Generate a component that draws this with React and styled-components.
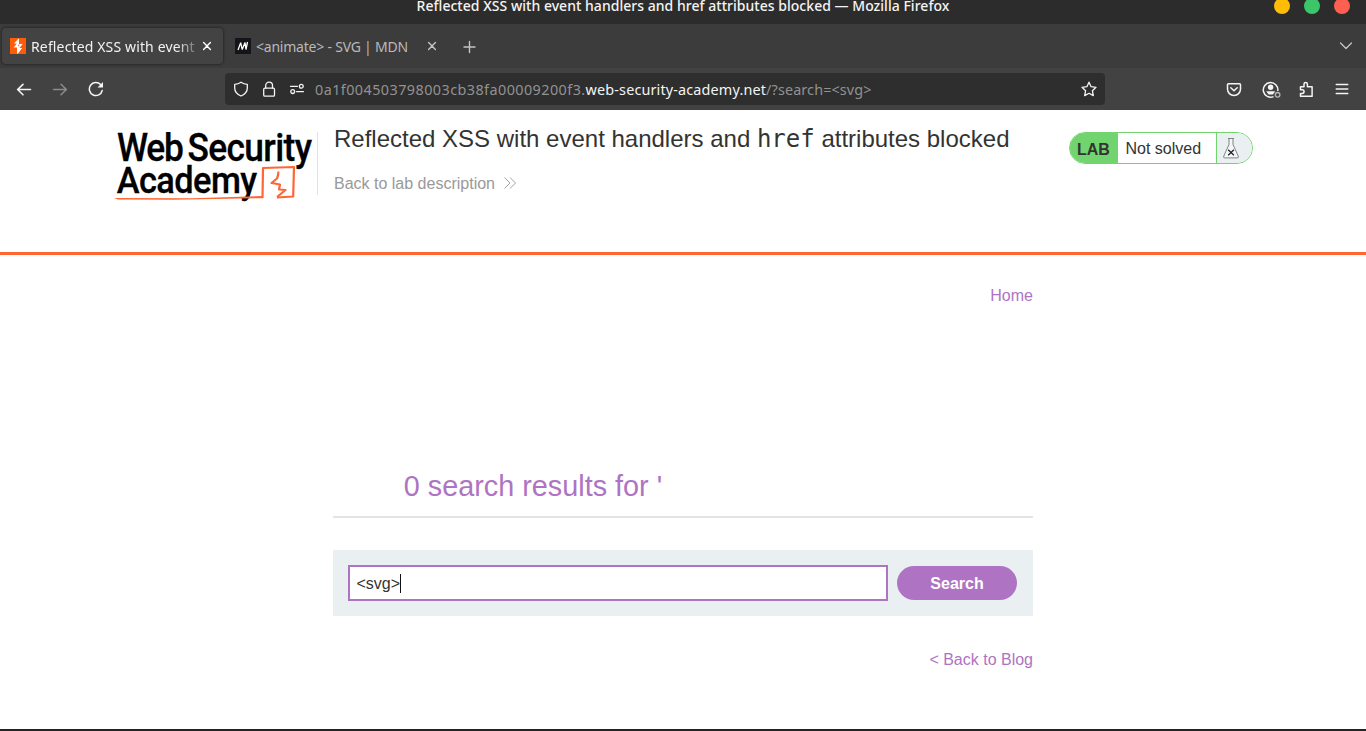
import React from "react";
import styled, { createGlobalStyle, css } from "styled-components";

const Global = createGlobalStyle`
  *, *::before, *::after { box-sizing: border-box; }
  body { margin: 0; background: #fff; overflow: hidden; }
  svg { display: block; flex: none; }
`;

const ui = css`
  font-family: "Noto Sans", "Open Sans", sans-serif;
  white-space: nowrap;
`;

const Window = styled.div`
  display: flex;
  flex-direction: column;
  height: 731px;
  width: 1366px;
  overflow: hidden;
  border-bottom: 2px solid #242424;
  font-family: "Liberation Sans", Arial, sans-serif;
  color: #333332;
`;

const TitleBar = styled.div`
  ${ui}
  display: grid;
  grid-template-columns: 1fr auto 1fr;
  height: 24px;
  flex: none;
  background: #2c2c2c;
  color: #f4f4f4;
  font-size: 14px;
  font-weight: 500;
  line-height: 20px;
`;
const WindowTitle = styled.div`
  grid-column: 2;
  margin-top: -4px;
  letter-spacing: 0.03px;
`;
const Controls = styled.div`
  display: flex;
  justify-content: flex-end;
  gap: 14px;
  margin-top: -2px;
  padding-right: 16px;
`;
const Dot = styled.span`
  width: 16px;
  height: 16px;
  border-radius: 50%;
  background: ${(p) => p.$color};
`;

const TabStrip = styled.div`
  display: flex;
  align-items: center;
  height: 44px;
  flex: none;
  padding: 0 12px 0 2px;
  background: #3c3c3c;
`;
const Tab = styled.div`
  ${ui}
  display: flex;
  align-items: center;
  width: 221px;
  height: 36px;
  padding-left: 8px;
  margin-right: 4px;
  border-radius: 4px;
  color: ${(p) => (p.$active ? "#f2f2f2" : "#b9b9b9")};
  background: ${(p) => (p.$active ? "#434343" : "transparent")};
  box-shadow: ${(p) => (p.$active ? "0 0 3px rgba(0, 0, 0, 0.65)" : "none")};
`;
const TabLabel = styled.span`
  width: 165px;
  margin: 0 3px 0 5px;
  padding-top: 1px;
  overflow: hidden;
  font-size: 14px;
  line-height: 20px;
  letter-spacing: ${(p) => p.$spacing}px;
  mask-image: ${(p) => (p.$fade ? "linear-gradient(90deg, #000 88%, transparent 104%)" : "none")};
`;
const Spacer = styled.div`
  flex: 1;
`;
const NewTab = styled.div`
  padding: 1px 0 0 4px;
`;

const Toolbar = styled.div`
  display: flex;
  align-items: center;
  height: 42px;
  flex: none;
  padding: 0 16px;
  background: #424242;
  color: #f4f4f4;
`;
const NavButtons = styled.div`
  display: flex;
  gap: 20px;
  width: 209px;
`;
const UrlBar = styled.div`
  display: flex;
  align-items: center;
  width: 880px;
  height: 32px;
  padding: 0 8px;
  border-radius: 4px;
  background: #2e2e2e;
`;
const UrlIcons = styled.div`
  display: flex;
  gap: 12px;
  margin-right: 10px;
`;
const Url = styled.div`
  ${ui}
  flex: 1;
  padding-top: 1px;
  color: #929292;
  font-size: 14.4px;
  line-height: 20px;
  letter-spacing: 0.12px;
`;
const Subdomain = styled.span`
  letter-spacing: 0.43px;
`;
const Domain = styled.span`
  color: #f4f4f4;
  letter-spacing: 0.15px;
`;
const Actions = styled.div`
  display: flex;
  flex: 1;
  justify-content: flex-end;
  gap: 20px;
`;
const AccountIcon = styled.svg`
  margin-right: -4px;
`;

const LabHeader = styled.header`
  display: flex;
  height: 145px;
  flex: none;
  padding: 22px 113px 0;
  border-bottom: 3px solid #ff6633;
`;
const LogoBox = styled.div`
  width: 205px;
  height: 63px;
  border-right: 1px solid #e2e2e2;
`;
const Heading = styled.div`
  flex: 1;
  padding-left: 16px;
  margin-top: -8px;
`;
const Title = styled.h2`
  margin: 0;
  font-size: 24px;
  font-weight: 400;
  line-height: 30px;
  white-space: nowrap;
`;
const Code = styled.code`
  font-family: "DejaVu Sans Mono", monospace;
  font-size: 24px;
`;
const DescriptionLink = styled.a`
  display: flex;
  align-items: center;
  gap: 9px;
  margin-top: 20px;
  color: #999;
  font-size: 16px;
  line-height: 19px;
`;
const Chevrons = styled.svg`
  margin-bottom: 2px;
`;
const Status = styled.div`
  display: flex;
  width: 184px;
  height: 32px;
  overflow: hidden;
  border: 1px solid #72d46e;
  border-radius: 16px;
  font-size: 16px;
  line-height: 31px;
`;
const StatusLabel = styled.span`
  width: 48px;
  padding-left: 7px;
  background: #72d46e;
  font-weight: 700;
  line-height: 33px;
`;
const StatusText = styled.span`
  width: 99px;
  padding-left: 7.5px;
  border-right: 1px solid #72d46e;
`;
const StatusIcon = styled.span`
  flex: 1;
  padding: 5px 0 0 6px;
  background: #eaeff2;
`;

const Page = styled.main`
  display: flex;
  flex-direction: column;
  width: 700px;
  margin: 0 auto;
`;
const PageLink = styled.a`
  align-self: flex-end;
  color: #ae74c3;
  font-size: 16px;
  line-height: 18px;
  margin-top: ${(p) => p.$top}px;
`;
const Results = styled.h1`
  height: 54px;
  margin: 159px 0 32px;
  padding-left: 70.8px;
  border-bottom: 2px solid #e4e4e4;
  color: #ae74c3;
  font-size: 28.8px;
  font-weight: 400;
  line-height: 44px;
`;
const SearchForm = styled.div`
  display: flex;
  align-items: center;
  gap: 9px;
  height: 66px;
  padding: 0 15px;
  background: #eaeff2;
`;
const SearchField = styled.div`
  display: flex;
  align-items: center;
  width: 540px;
  height: 36px;
  padding-left: 6.4px;
  border: 2px solid #ae74c3;
  background: #fff;
  font-size: 16px;
`;
const Query = styled.span`
  padding-top: 2px;
`;
const Caret = styled.span`
  width: 1px;
  height: 19px;
  background: #111;
`;
const SearchButton = styled.button`
  width: 120px;
  height: 34px;
  padding: 2px 0 0;
  border: 0;
  border-radius: 17px;
  background: #ae74c3;
  color: #fff;
  font: 700 16px "Liberation Sans", Arial, sans-serif;
`;

const Icon = ({ size = 16, children, color = "currentColor", width = 1.3 }) => (
  <svg width={size} height={size} viewBox={`0 0 ${size} ${size}`} fill="none" stroke={color}
    strokeWidth={width} strokeLinecap="round" strokeLinejoin="round">{children}</svg>
);

const BurpIcon = () => (
  <svg width="16" height="16" viewBox="0 0 16 16">
    <path fill="#ff5c0a" d="M0 0h16v16H0z" />
    <path fill="#fff" d="M8.300.8H9v5.200h3.600L9.500 10h2.600L8 15.400H7V9.500H3.700L6.800 5.600H4z" />
    <path fill="#ff5c0a" d="M8.200 6.800h1.700L8.200 8.800z" />
  </svg>
);
const MdnIcon = () => (
  <svg width="16" height="16" viewBox="0 0 16 16">
    <path fill="#15141a" d="M0 0h16v16H0z" />
    <path d="M3 12 5.700 4.600 7.200 11.500 10 4.600 11 11.500 12.500 4" fill="none" stroke="#fff" strokeWidth="1.300" strokeLinejoin="bevel" />
  </svg>
);
const CloseIcon = ({ color }) => (
  <Icon color={color} width={1.4}><path d="m4.600 4.600 6.800 6.800M11.400 4.600l-6.800 6.800" /></Icon>
);

const Logo = () => (
  <svg width="202" height="72" viewBox="0 0 202 72">
    <g fill="#000" stroke="#000" strokeWidth="0.300" fontFamily="Roboto, sans-serif" fontWeight="500" transform="scale(0.93 1)">
      <text x="4.300" y="28.500" fontSize="38" textLength="72" lengthAdjust="spacing">Web</text>
      <text x="80" y="28.500" fontSize="38" textLength="134" lengthAdjust="spacing">Security</text>
      <text x="4" y="61.500" fontSize="37" textLength="151" lengthAdjust="spacing">Academy</text>
    </g>
    <g fill="none" stroke="#ff6633" strokeWidth="2.200" strokeLinejoin="round">
      <path d="M149.500 66 150 36l31-1-.8 29.500L164 65.500" />
      <path d="M165.300 39.500c.5 2.500-.5 5-1.300 7l-5.500 4.500 8.500 1.500-1 5 6.500.5-8.500 7" />
    </g>
    <path fill="#ff6633" d="M1 66 80 66.200 150 64v2.200L60 67.800 5 67.600z" />
  </svg>
);

export default function App() {
  return (
    <Window>
      <Global />
      <TitleBar>
        <WindowTitle>Reflected XSS with event handlers and href attributes blocked — Mozilla Firefox</WindowTitle>
        <Controls><Dot $color="#ffbd08" /><Dot $color="#3ac669" /><Dot $color="#ff5f50" /></Controls>
      </TitleBar>
      <TabStrip>
        <Tab $active>
          <BurpIcon />
          <TabLabel $fade $spacing={0.14}>Reflected XSS with event handlers</TabLabel>
          <CloseIcon color="#fff" />
        </Tab>
        <Tab>
          <MdnIcon />
          <TabLabel $spacing={-0.22}>&lt;animate&gt; - SVG | MDN</TabLabel>
          <CloseIcon color="#c4c4c4" />
        </Tab>
        <NewTab><Icon size={28} width={1.400} color="#c4c4c4"><path d="M13.500 8.500v11M8 14h11" /></Icon></NewTab>
        <Spacer />
        <Icon size={16} color="#c4c4c4"><path d="M2.500 5 8 10.500 13.500 5" /></Icon>
      </TabStrip>
      <Toolbar>
        <NavButtons>
          <Icon width={1.600}><path d="M14.500 8.500H1.800M7 3.300 1.600 8.500 7 13.800" /></Icon>
          <Icon width={1.500} color="#8b8b8b"><path d="M1.500 8.500h12.700M9 3.300l5.400 5.200L9 13.800" /></Icon>
          <Icon width={1.500}><path d="M14.200 9.500A6.500 6.500 0 1 1 12.600 3.600" /><path fill="currentColor" stroke="none" d="M15 1v5.500H9.500z" /></Icon>
        </NavButtons>
        <UrlBar>
          <UrlIcons>
            <Icon><path d="M8 1.200c2.200 1.500 4.200 2 6.300 2.200V7c0 3.800-2.800 6.500-6.300 8-3.500-1.500-6.300-4.200-6.300-8V3.400C3.800 3.200 5.800 2.700 8 1.200z" /></Icon>
            <Icon><rect x="2.700" y="7.200" width="10.800" height="8" rx="1.200" /><path d="M4.700 7V4.500a3.400 3.400 0 0 1 6.800 0V7" /></Icon>
            <Icon><path d="M1.500 5.300h7M7.500 10.600h7" /><circle cx="12.300" cy="5.200" r="1.900" /><circle cx="3.700" cy="10.600" r="1.900" /></Icon>
          </UrlIcons>
          <Url><Subdomain>0a1f004503798003cb38fa00009200f3.</Subdomain><Domain>web-security-academy.net</Domain>/?search=&lt;svg&gt;</Url>
          <Icon><path d="m8 1.200 2.100 4.500 4.900.6-3.600 3.400.9 4.900L8 12.300l-4.300 2.300.9-4.900L1 6.300l4.900-.6z" /></Icon>
        </UrlBar>
        <Actions>
          <Icon width={1.500}><path d="M2.500 2.800h11a1 1 0 0 1 1 1V8a6.500 6.500 0 0 1-13 0V3.800a1 1 0 0 1 1-1zM4.800 6.800 8 9.800l3.200-3" /></Icon>
          <AccountIcon width="20" height="17" viewBox="0 0 20 17" fill="none" stroke="currentColor" strokeWidth="1.500">
            <path d="M11.500 15.600A7.300 7.300 0 1 1 15.800 10" /><circle cx="8.600" cy="6.300" r="2.700" fill="currentColor" stroke="none" />
            <path d="M4.200 10.200h9l-2.200 3.200H6.600z" fill="currentColor" stroke="none" />
            <circle cx="15.600" cy="13.800" r="2.300" stroke="#b5b5b5" strokeWidth="1.300" />
          </AccountIcon>
          <Icon width={1.500}><path d="M2.500 5.700h3.500V3.200a1.700 1.700 0 0 1 3.400 0v2.500h4.700v9.600H2.500v-2.900h1.700a1.800 1.800 0 0 0 0-3.700H2.500z" /></Icon>
          <Icon width={1.400}><path d="M2.200 3.500h11.600M2.200 8h11.600M2.200 12.500h11.600" /></Icon>
        </Actions>
      </Toolbar>
      <LabHeader>
        <LogoBox><Logo /></LogoBox>
        <Heading>
          <Title>Reflected XSS with event handlers and <Code>href</Code> attributes blocked</Title>
          <DescriptionLink>
            Back to lab description
            <Chevrons width="12" height="12" viewBox="0 0 12 12" fill="none" stroke="#999" strokeWidth="0.9"><path d="m.5.500 5.500 5.500-5.500 5.500M6 .500 11.500 6 6 11.500" /></Chevrons>
          </DescriptionLink>
        </Heading>
        <Status>
          <StatusLabel>LAB</StatusLabel>
          <StatusText>Not solved</StatusText>
          <StatusIcon>
            <svg width="17" height="21" viewBox="0 0 17 21" fill="none">
              <path d="M5 .5h6M6 .5v6L.8 18q-.8 1.900 1 1.900h12.400q1.800 0 1-1.900L10 6.500v-6" stroke="#777" strokeWidth="0.900" fill="#f4f7f8" />
              <path d="m5.200 11.800 5.700 5.400M10.900 11.800l-5.700 5.400" stroke="#222" strokeWidth="1.300" />
            </svg>
          </StatusIcon>
        </Status>
      </LabHeader>
      <Page>
        <PageLink $top={32}>Home</PageLink>
        <Results>0 search results for '</Results>
        <SearchForm>
          <SearchField><Query>&lt;svg&gt;</Query><Caret /></SearchField>
          <SearchButton>Search</SearchButton>
        </SearchForm>
        <PageLink $top={35}>&lt; Back to Blog</PageLink>
      </Page>
    </Window>
  );
}
